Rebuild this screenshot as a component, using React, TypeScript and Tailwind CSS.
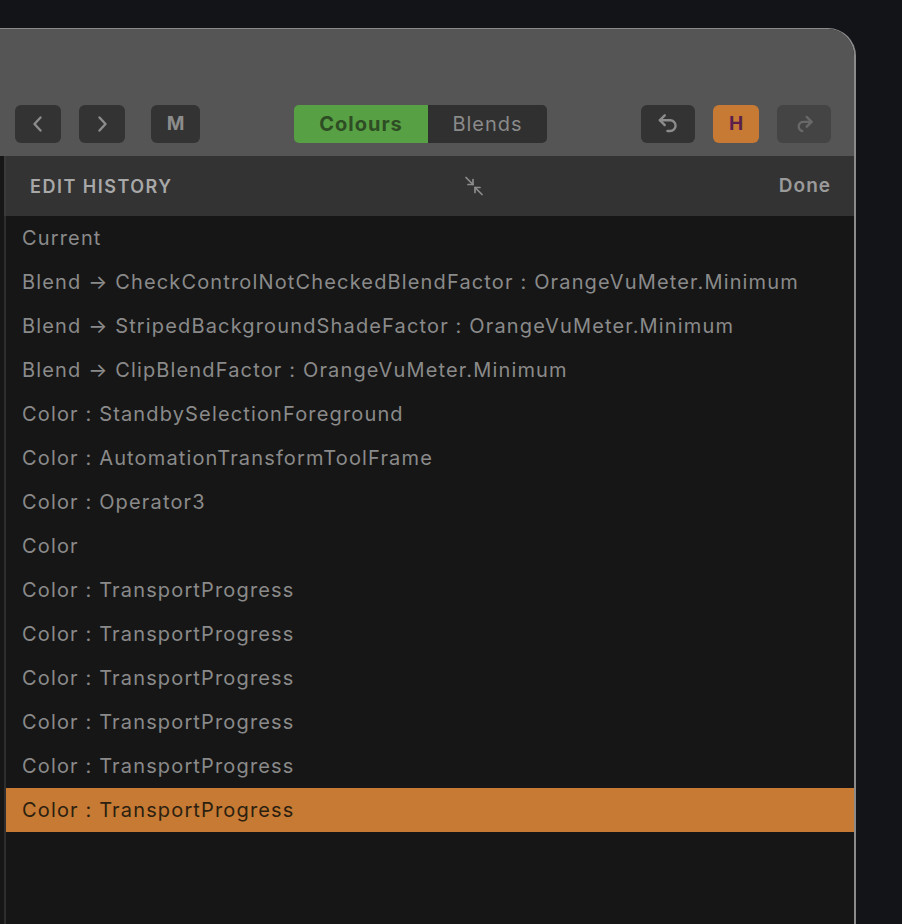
import React from "react";

const rows = [
  "Current",
  "Blend \u2192 CheckControlNotCheckedBlendFactor : OrangeVuMeter.Minimum",
  "Blend \u2192 StripedBackgroundShadeFactor : OrangeVuMeter.Minimum",
  "Blend \u2192 ClipBlendFactor : OrangeVuMeter.Minimum",
  "Color : StandbySelectionForeground",
  "Color : AutomationTransformToolFrame",
  "Color : Operator3",
  "Color",
  "Color : TransportProgress",
  "Color : TransportProgress",
  "Color : TransportProgress",
  "Color : TransportProgress",
  "Color : TransportProgress",
  "Color : TransportProgress",
];

function Chevron({ dir }: { dir: "l" | "r" }) {
  return (
    <svg width="14" height="20" viewBox="0 0 14 20" fill="none" stroke="#8c8c8c" strokeWidth="2.4" strokeLinecap="round" strokeLinejoin="round">
      {dir === "l" ? <path d="M9.5 3.5 3.5 10l6 6.5" /> : <path d="M4.5 3.5 10.5 10l-6 6.5" />}
    </svg>
  );
}

export default function App() {
  return (
    <div className="w-[902px] h-[924px] bg-[#131417] pt-[28px] overflow-hidden" style={{ fontFamily: "Inter, 'Noto Sans', sans-serif" }}>
      <div className="w-[856px] h-[896px] bg-[#161616] rounded-tr-[28px] border-t border-r-2 border-[#8a8a8a] overflow-hidden flex flex-col">
        {/* toolbar */}
        <div className="h-[127px] bg-[#555555] pl-[4px] flex items-end pb-[13px]">
          <div className="flex items-center w-full">
            <button className="ml-[11px] w-[46px] h-[38px] rounded-[6px] bg-[#333333] flex items-center justify-center">
              <Chevron dir="l" />
            </button>
            <button className="ml-[18px] w-[46px] h-[38px] rounded-[6px] bg-[#333333] flex items-center justify-center">
              <Chevron dir="r" />
            </button>
            <button className="ml-[26px] w-[49px] h-[38px] rounded-[6px] bg-[#333333] flex items-center justify-center text-[19px] font-bold text-[#8c8c8c]">
              M
            </button>
            <div className="ml-[94px] flex h-[38px] rounded-[5px] overflow-hidden">
              <div className="w-[134px] bg-[#58a044] flex items-center justify-center text-[20px] font-bold tracking-[1px] text-[#2e4d24]">Colours</div>
              <div className="w-[119px] bg-[#303030] flex items-center justify-center text-[20px] tracking-[1px] text-[#8a8a8a]">Blends</div>
            </div>
            <button className="ml-[94px] w-[54px] h-[38px] rounded-[6px] bg-[#333333] flex items-center justify-center">
              <svg width="26" height="26" viewBox="0 0 24 24" fill="none" stroke="#8c8c8c" strokeWidth="2.2" strokeLinecap="round" strokeLinejoin="round">
                <path d="M9 13 4.5 8.5 9 4" />
                <path d="M4.5 8.5H14a5 5 0 0 1 0 10h-2.5" />
              </svg>
            </button>
            <button className="ml-[18px] w-[46px] h-[38px] rounded-[6px] bg-[#c67a33] flex items-center justify-center text-[19px] font-bold text-[#5a1f4c]">
              H
            </button>
            <button className="ml-[18px] w-[54px] h-[38px] rounded-[6px] bg-[#444444] flex items-center justify-center">
              <svg width="26" height="26" viewBox="0 0 24 24" fill="none" stroke="#686868" strokeWidth="2.2" strokeLinecap="round" strokeLinejoin="round">
                <path d="M14.5 5.5 19 10l-4.5 4.5" />
                <path d="M19 10h-7.5a4.3 4.3 0 0 0-1 8.5" />
              </svg>
            </button>
          </div>
        </div>
        {/* header */}
        <div className="h-[60px] bg-[#333333] ml-[4px] border-l-2 border-[#3a3a3a] flex items-center pl-[24px] pr-[23px]">
          <span className="text-[18px] font-semibold text-[#a8a8a8] tracking-[1.5px] w-[434px]">EDIT HISTORY</span>
          <svg width="20" height="20" viewBox="0 0 20 20" fill="none" stroke="#8c8c8c" strokeWidth="1.7" strokeLinecap="round" strokeLinejoin="round">
            <path d="M2 1.5l7 7" />
            <path d="M9 3.5V8.5H4" />
            <path d="M18 18.5l-7-7" />
            <path d="M11 16.5V11.5H16" />
          </svg>
          <span className="flex-1 text-[19px] font-semibold text-[#9a9a9a] tracking-[1px] text-right">Done</span>
        </div>
        {/* list */}
        <div className="flex-1 ml-[4px] border-l-2 border-[#2e2e2e] flex flex-col">
          {rows.map((r, i) => {
            const sel = i === rows.length - 1;
            return (
              <div
                key={i}
                className={
                  sel
                    ? "h-[44px] flex items-center pl-[16px] bg-[#c67a33] text-[#2c1f10] text-[20px] tracking-[1.15px]"
                    : "h-[44px] flex items-center pl-[16px] text-[#8a8a8a] text-[20px] tracking-[1.15px]"
                }
              >
                {r}
              </div>
            );
          })}
        </div>
      </div>
    </div>
  );
}
